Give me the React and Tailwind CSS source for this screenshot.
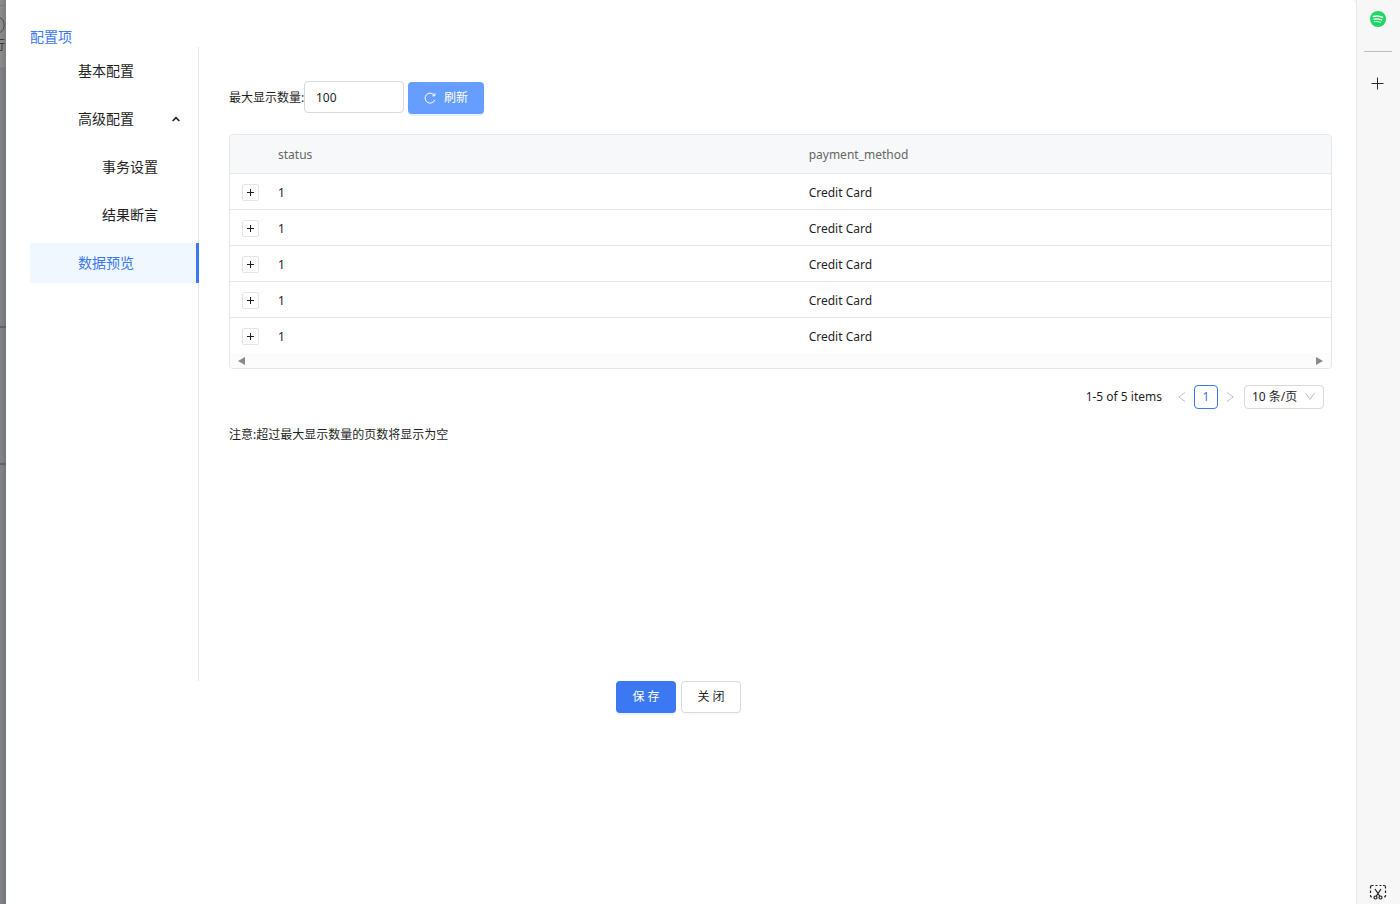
import { useState } from "react";

const rows = [1, 2, 3, 4, 5].map((id) => ({ id, status: "1", method: "Credit Card" }));

function MenuItem({ children, nested, active }) {
  return (
    <a
      href="#"
      aria-current={active ? "page" : undefined}
      className={
        "flex h-10 items-center text-sm " +
        (nested ? "pl-[72px] " : "pl-12 ") +
        (active ? "border-r-[3px] border-[#3b78f2] bg-[#f0f7ff] text-[#3b78f2]" : "text-[#1f1f1f]")
      }
    >
      {children}
    </a>
  );
}

function PageBehind() {
  return (
    <div
      aria-hidden="true"
      className="relative flex w-1.5 shrink-0 flex-col overflow-hidden bg-linear-to-r from-[#838488] to-[#747579]"
    >
      <div className="h-[67px] bg-linear-to-r from-[#8c8c8c] to-[#7e7e7e]">
        <div className="h-[6px] border-b border-[#7a7a84]" />
        <div className="h-[54px] border-b border-[#7a7a84]">
          <svg className="mt-2.5 h-[18px] w-1.5" viewBox="0 0 6 18" fill="none" stroke="#4a4a4a">
            <path d="M0 1.5C5.5 4 5.500 14 0 16.500" />
          </svg>
          <span className="-ml-2 block text-[13px] leading-5 text-[#3a3a3a]">行</span>
        </div>
      </div>
      <div className="absolute top-[326px] h-0.5 w-full bg-[#606164]" />
      <div className="absolute top-[463px] h-0.5 w-full bg-[#606164]" />
    </div>
  );
}

function EdgeBar() {
  return (
    <aside className="flex w-11 shrink-0 flex-col items-center border-l border-[#e6e6e6] bg-[#f7f7f7] pt-[11px] pr-0.5 pb-1">
      <button type="button" aria-label="Spotify">
        <svg className="size-4" viewBox="0 0 16 16" fill="none" strokeLinecap="round">
          <circle cx="8" cy="8" r="8" fill="#1ed760" />
          <path d="M3.400 5.500c3-.9 6.600-.6 9.200.9" stroke="#fff" strokeWidth="1.500" />
          <path d="M3.900 8.200c2.600-.7 5.500-.4 7.700.9" stroke="#fff" strokeWidth="1.200" />
          <path d="M4.200 10.700c2.200-.5 4.600-.3 6.400.8" stroke="#fff" strokeWidth="1" />
        </svg>
      </button>
      <div className="mt-6 h-px w-7 bg-[#bdbdbd]" />
      <button type="button" aria-label="Add" className="mt-6">
        <svg className="size-4" viewBox="0 0 16 16" fill="none" stroke="#2b2b2b">
          <path d="M7.500 1.500v12M1.500 7.500h12" />
        </svg>
      </button>
      <button type="button" aria-label="Screenshot" className="mt-auto">
        <svg className="h-4 w-[18px]" viewBox="0 0 18 16" fill="none" stroke="#222" strokeWidth="1.200">
          <path d="M1.500 4.500V3.200Q1.500 1.500 3 1.500H4.500M6.500 1.500h2M10.500 1.500h2M14 1.500h1Q16.500 1.500 16.500 3.200v1.300M1.500 6.500v2.500M16.500 6.500v2.500M1.500 11v1q0 1 1.500 1M16.500 11v1q0 1-1.500 1" />
          <path d="M6 5l5 7.500M12 5L7 12.500" />
          <circle cx="6.500" cy="13.500" r="1.500" />
          <circle cx="11.500" cy="13.500" r="1.500" />
        </svg>
      </button>
    </aside>
  );
}

export default function App() {
  const [limit, setLimit] = useState("100");
  return (
    <div className="flex min-h-screen bg-[#f7f7f7] font-['Noto_Sans','Noto_Sans_CJK_SC',sans-serif] text-xs text-[#1f1f1f]">
      <PageBehind />
      <main className="min-w-0 flex-1 rounded-tr-md bg-white px-6 pt-[26px]">
        <h1 className="h-[21px] text-sm leading-[22px] text-[#3b78f2]">配置项</h1>
        <div className="flex min-h-[634px]">
          <nav className="flex w-[169px] shrink-0 flex-col gap-2 bg-linear-to-l from-[#e5e5e5] from-[1px] to-transparent to-[1px] pt-1">
            <MenuItem>基本配置</MenuItem>
            <button type="button" aria-expanded="true" className="flex h-10 items-center justify-between pr-[18px] pl-12 text-sm">
              高级配置
              <svg className="size-2.5" viewBox="0 0 10 10" fill="none" stroke="#1f1f1f" strokeWidth="1.600">
                <path d="M1.700 7L5 3.700L8.300 7" />
              </svg>
            </button>
            <MenuItem nested>事务设置</MenuItem>
            <MenuItem nested>结果断言</MenuItem>
            <MenuItem active>数据预览</MenuItem>
          </nav>
          <section className="min-w-0 flex-1 pt-[34px] pl-[30px]">
            <div className="flex items-end">
              <label htmlFor="limit" className="w-[75px] whitespace-nowrap leading-8">最大显示数量:</label>
              <input
                id="limit"
                value={limit}
                onChange={(e) => setLimit(e.target.value)}
                className="mb-px h-8 w-[100px] rounded border border-[#d9d9d9] px-[11px] outline-none"
              />
              <button type="button" className="ml-1 flex h-8 w-[76px] items-center justify-center gap-2 rounded bg-[#669eff] text-white shadow-[0_2px_0_#0591ff1a]">
                <svg className="size-3" viewBox="0 0 12 12" fill="none" stroke="#fff">
                  <path d="M10.800 7.800A5 5 0 1 1 10 3" />
                  <path d="M10.900 1.200V3.800H8.300" />
                </svg>
                刷新
              </button>
            </div>
            <div className="mt-5 overflow-hidden rounded border border-[#e5e6e8]">
              <table className="w-full table-fixed border-separate border-spacing-0 text-left">
                <colgroup>
                  <col className="w-9" />
                  <col className="w-[48.2%]" />
                  <col />
                </colgroup>
                <thead>
                  <tr className="h-[39px] bg-[#f7f8fa] text-[#666] *:border-b *:border-[#e5e6e8]">
                    <th aria-label="Expand" />
                    <th className="px-3 pt-0.5 font-normal">status</th>
                    <th className="px-3 pt-0.5 font-normal">payment_method</th>
                  </tr>
                </thead>
                <tbody>
                  {rows.map((row) => (
                    <tr key={row.id} className="h-9 *:border-b *:border-[#e5e6e8] last:h-[35px] last:*:border-b-0">
                      <td className="pt-0.5 pl-3">
                        <button type="button" aria-label="Expand row" className="flex size-[17px] items-center justify-center rounded-xs border border-[#e5e5e5]">
                          <svg className="size-[7px]" viewBox="0 0 7 7" stroke="#1f1f1f">
                            <path d="M3.500 0v7M0 3.500h7" />
                          </svg>
                        </button>
                      </td>
                      <td className="px-3 pt-0.5">{row.status}</td>
                      <td className="px-3 pt-0.5">{row.method}</td>
                    </tr>
                  ))}
                </tbody>
              </table>
              <div className="flex h-[15px] items-center justify-between bg-[#fcfcfc] px-2">
                <svg className="h-2 w-[7px]" viewBox="0 0 7 8" fill="#8a8a8a"><path d="M7 0v8L0 4z" /></svg>
                <svg className="h-2 w-[7px]" viewBox="0 0 7 8" fill="#8a8a8a"><path d="M0 0v8L7 4z" /></svg>
              </div>
            </div>
            <div className="mt-4 flex h-6 items-center justify-end pr-2">
              <span className="mr-2">1-5 of 5 items</span>
              <button type="button" aria-label="Previous page" className="flex h-6 w-6 items-center justify-center">
                <svg className="size-3" viewBox="0 0 12 12" fill="none" stroke="#bfbfbf"><path d="M9 1.500L2.800 6L9 10.500" /></svg>
              </button>
              <button type="button" aria-current="page" className="h-6 w-6 rounded border border-[#3b78f2] text-[#3b78f2]">1</button>
              <button type="button" aria-label="Next page" className="flex h-6 w-6 items-center justify-center">
                <svg className="size-3" viewBox="0 0 12 12" fill="none" stroke="#bfbfbf"><path d="M3 1.500L9.200 6L3 10.500" /></svg>
              </button>
              <div className="relative ml-0.5">
                <select aria-label="每页条数" className="block h-6 w-20 appearance-none rounded border border-[#d9d9d9] bg-transparent pl-[7px]">
                  <option>10 条/页</option>
                </select>
                <svg className="pointer-events-none absolute top-[7px] right-[9px] size-2.5" viewBox="0 0 10 10" fill="none" stroke="#bfbfbf">
                  <path d="M.5 1L5 7.500L9.500 1" />
                </svg>
              </div>
            </div>
            <p className="mt-[18px]">注意:超过最大显示数量的页数将显示为空</p>
          </section>
        </div>
        <div className="flex justify-center gap-[5px] pr-[5px]">
          <button type="button" className="h-8 w-[60px] rounded bg-[#3b78f2] text-white shadow-[0_2px_0_#0591ff1a]">保 存</button>
          <button type="button" className="h-8 w-[60px] rounded border border-[#d9d9d9] bg-white shadow-[0_2px_0_#00000005]">关 闭</button>
        </div>
      </main>
      <EdgeBar />
    </div>
  );
}
